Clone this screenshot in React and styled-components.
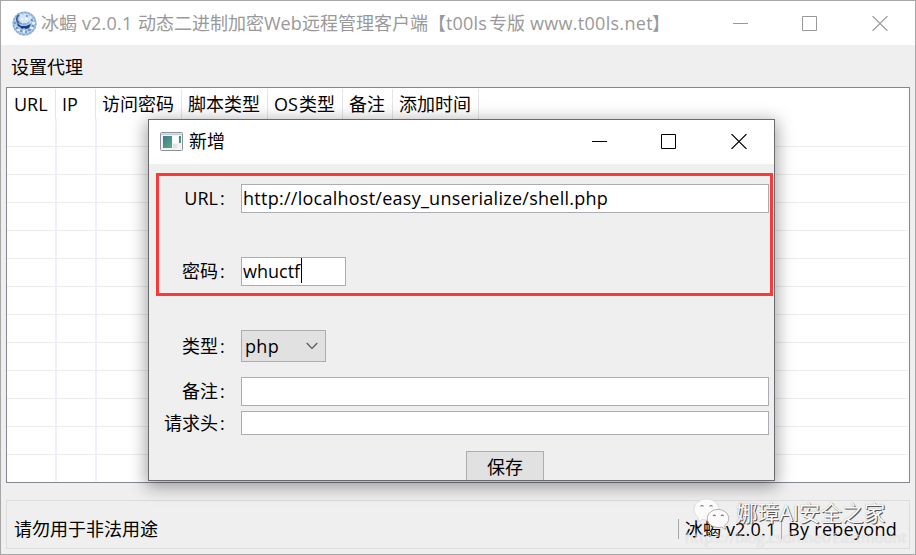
import React from "react";
import styled, { createGlobalStyle } from "styled-components";

const Global = createGlobalStyle`
  * { box-sizing: border-box; }
  body { margin: 0; overflow: hidden; }
  body, input, button {
    font-family: "Open Sans", "Noto Sans CJK SC", sans-serif;
    font-size: 18px;
    line-height: 24px;
    color: #000;
  }
`;

const Desktop = styled.div`
  width: 916px;
  height: 555px;
  padding: 1px;
  background: #a6a6a6;
  position: relative;
`;
const Window = styled.main`
  height: 553px;
  display: flex;
  flex-direction: column;
  background: #efefef;
`;
const TitleBar = styled.header`
  height: 44px;
  flex: none;
  display: flex;
  align-items: center;
  background: #fff;
  color: ${(p) => p.$color || "#999"};
  padding-left: 11px;
`;
const Caption = styled.div`
  flex: 1;
  white-space: pre;
  margin: -1px 0 0 ${(p) => p.$left}px;
`;
/* Latin run set in its own box so the CJK grid around it keeps an 18px pitch */
const Latin = styled.span`
  display: inline-block;
  width: ${(p) => p.$w}px;
  font-size: ${(p) => p.$size || 18}px;
  letter-spacing: ${(p) => p.$ls || 0}px;
  white-space: pre;
`;
const Controls = styled.div`
  display: flex;
  width: ${(p) => p.$width}px;
  gap: ${(p) => p.$gap}px;
  svg { display: block; }
  svg:last-child { margin-left: 1px; }
`;
const MenuBar = styled.nav`
  height: 42px;
  flex: none;
  display: flex;
  align-items: center;
  padding: 2px 0 0 10px;
`;
const Table = styled.section`
  height: 396px;
  flex: none;
  margin: 0 5px;
  border: 1px solid #828790;
  background: #fff;
  display: flex;
  flex-direction: column;
`;
const HeaderRow = styled.div`
  display: grid;
  grid-template-columns: 49px 40px 86px 86px 75px 50px 86px;
  height: 31px;
  flex: none;
  padding-top: 1px;
`;
const HeaderCell = styled.div`
  border-right: 1px solid #e5e5e5;
  padding: 3px 0 0 ${(p) => p.$pad || 6}px;
  white-space: nowrap;
`;
const Rows = styled.div`
  flex: 1;
  min-height: 0;
  overflow: hidden;
  margin: 0 1px 1px 0;
`;
const Row = styled.div`
  height: 28px;
  border-bottom: 1px solid #ececec;
  display: grid;
  grid-template-columns: 50px 40px 86px 86px 75px 50px 86px;
`;
const Cell = styled.div`
  border-right: 2px solid #edf1f7;
  height: 28px;
`;
const StatusBar = styled.footer`
  height: 49px;
  margin: 17px 5px 0;
  border: 1px solid #dcdcdc;
  display: flex;
  align-items: center;
  padding: 9px 12px 0 7px;
`;
const StatusText = styled.div`
  flex: ${(p) => (p.$grow ? 1 : "none")};
  white-space: nowrap;
`;
const Divider = styled.i`
  width: 1px;
  height: 20px;
  background: #a9a9a9;
  margin: 0 6px;
`;

const Dialog = styled.div`
  position: absolute;
  left: 148px;
  top: 119px;
  width: 627px;
  height: 362px;
  border: 1px solid #6b6b6e;
  background: #efefef;
  box-shadow: 0 4px 16px 2px rgba(0, 0, 0, 0.36);
  display: flex;
  flex-direction: column;
`;
const DialogTitle = styled(TitleBar)`
  padding-bottom: 1px;
`;
const Form = styled.div`
  flex: 1;
  min-height: 0;
  overflow: hidden;
  padding: 20px 5px 0 0;
  display: flex;
  flex-direction: column;
`;
const Field = styled.label`
  display: grid;
  grid-template-columns: 92px 1fr;
  grid-template-rows: 100%;
  align-items: center;
  height: ${(p) => p.$h}px;
  margin-bottom: ${(p) => p.$gap}px;
  flex: none;
`;
const Label = styled.span`
  padding: 0 14px 1px 0;
  text-align: right;
  white-space: nowrap;
`;
const Colon = styled.span`
  display: inline-block;
  width: 7px;
  margin-left: 2px;
  text-align: left;
`;
const Input = styled.div`
  height: 100%;
  width: ${(p) => p.$w || 528}px;
  border: 1px solid #abadb3;
  background: #fff;
  padding: 0 0 2px 1px;
  display: flex;
  align-items: center;
`;
const Caret = styled.i`
  width: 1px;
  height: 25px;
  background: #000;
`;
const Select = styled.div`
  height: 100%;
  width: 85px;
  border: 1px solid #adadad;
  background: #e1e1e1;
  display: flex;
  align-items: center;
  justify-content: space-between;
  padding: 0 7px 0 3px;
`;
const Save = styled.button`
  width: 78px;
  height: 34px;
  flex: none;
  margin-left: 317px;
  border: 1px solid #adadad;
  background: #e1e1e1;
  padding: 0 0 2px;
`;
const Highlight = styled.div`
  position: absolute;
  left: 156px;
  top: 173px;
  width: 617px;
  height: 123px;
  border: 3px solid #fc3939;
`;
const Watermark = styled.div`
  position: absolute;
  left: 693px;
  top: 497px;
  display: flex;
  align-items: center;
`;
const WatermarkName = styled.span`
  margin-left: 6px;
  font-size: 21.6px;
  line-height: 32px;
  height: 34px;
  white-space: nowrap;
  color: #f8f8f8;
  text-shadow: 1px 1px 0.5px #555, 0 0 1px #999;
`;
const WatermarkUrl = styled.div`
  position: absolute;
  left: 685px;
  top: 526px;
  font-size: 14.5px;
  letter-spacing: 0.1px;
  white-space: nowrap;
  color: rgba(255, 255, 255, 0.5);
  text-shadow: 0 0 1px rgba(120, 120, 120, 0.3);
`;

const Min = () => (
  <svg width="15" height="15" stroke="currentColor"><path d="M0 7.5H15" /></svg>
);
const Max = () => (
  <svg width="15" height="15" fill="none" stroke="currentColor"><path d="M.5 .5H14.5V14.5H.5Z" /></svg>
);
const Close = () => (
  <svg width="16" height="15" stroke="currentColor" strokeWidth="1.1"><path d="M.5 0L15.5 15M15.5 0L.5 15" /></svg>
);

const Globe = () => (
  <svg width="25" height="25" viewBox="0 0 25 25">
    <circle cx="12.5" cy="12.5" r="12" fill="#a3c1e2" />
    <g fill="none" strokeWidth="1.4" strokeDasharray="2 1.5">
      <circle cx="12.5" cy="12.5" r="11.2" stroke="#86a9d2" />
      <circle cx="12.5" cy="12.5" r="9.2" stroke="#dcebf8" />
    </g>
    <path d="M8 4l7-1 5 4-1 5-8 1-4-4z" fill="#d3e5f6" />
    <path d="M7 4C4 6 4 10 7 12" fill="none" stroke="#3d5f95" strokeWidth="1.8" />
    <path d="M7 12c5 2 10 1 13-4" fill="none" stroke="#6d8dba" strokeWidth="1" strokeDasharray="3 1" />
    <path d="M5 12l4 3 5 0 5-2-2 4-3 1-2-1-2 1-2-2-2-1z" fill="#173d85" />
    <path d="M4 17h2M8 20h2M13 21h2M16 19h3M20 15h2M2 12h2M19 9h2M14 5h2" stroke="#5f87bb" strokeWidth="1.4" />
    <path d="M5 19h3M11 20h2M18 17h3M13 8h3M9 8h2M20 12h3" stroke="#f4faff" strokeWidth="1.4" />
  </svg>
);
const AppIcon = () => (
  <svg width="23" height="19" viewBox="0 0 23 19">
    <defs>
      <linearGradient id="pane" x1="0" y1="0" x2="1" y2="1">
        <stop offset="0" stopColor="#44749b" />
        <stop offset="1" stopColor="#58ad79" />
      </linearGradient>
    </defs>
    <rect x=".5" y=".5" width="22" height="18" rx="1" fill="#f3f3f3" stroke="#8c9299" />
    <path d="M1 1.5H22V3H1Z" fill="#c3cbd4" />
    <path d="M3 4H12V16H3Z" fill="url(#pane)" />
    <path d="M13 4H18V11H13Z" fill="#fff" />
    <path d="M13 12H17V16H13Z" fill="#e3e3e3" />
    <path d="M19 4H21V11H19Z" fill="url(#pane)" />
  </svg>
);
const Chevron = () => (
  <svg width="12" height="8" fill="none" stroke="#555" strokeWidth="1.2"><path d="M.7 1L6 6.3L11.3 1" /></svg>
);
const WeChat = () => (
  <svg width="37" height="32" viewBox="0 0 37 32" strokeWidth=".8">
    <path d="M13.5 1C6.500 1 1 5.500 1 11.500c0 3.500 1.800 6.400 4.800 8.300L4.500 24l5-2.600c1.300.4 2.600.6 4 .6 7 0 12.500-4.700 12.500-10.500S20.500 1 13.500 1z" fill="#fbfbfb" stroke="#d5d5d5" />
    <path d="M25 11.500c-6 0-10.700 4-10.700 9s4.700 9 10.700 9c1.300 0 2.400-.2 3.500-.5l4.200 2.300-1.200-3.800c2.600-1.600 4.200-4.100 4.200-7 0-5-4.700-9-10.700-9z" fill="#fbfbfb" stroke="#a0a0a0" />
    <g fill="none" stroke="#777" strokeWidth="1.1">
      <path d="M7.500 8.500q1.500-2 3 0M16.500 8.500q1.500-2 3 0M20 18q1.300-1.800 2.600 0M28 18q1.300-1.800 2.600 0" />
    </g>
  </svg>
);

const COLUMNS = [0, 1, 2, 3, 4, 5, 6];
const ROWS = Array.from({ length: 13 }, (_, i) => i);

export default function App() {
  return (
    <Desktop>
      <Global />
      <Window>
        <TitleBar>
          <Globe />
          <Caption $left={4}>
            冰蝎<Latin $w={61} $ls={0.2}>{" v2.0.1 "}</Latin>动态二进制加密<Latin $w={38}>Web</Latin>远程管理客户端【<Latin $w={43} $ls={0.2}>t00ls</Latin>专版<Latin $w={127} $ls={0.3}>{" www.t00ls.net"}</Latin>】
          </Caption>
          <Controls $width={182} $gap={54}><Min /><Max /><Close /></Controls>
        </TitleBar>
        <MenuBar>设置代理</MenuBar>
        <Table>
          <HeaderRow>
            <HeaderCell $pad={7}><Latin $w={34}>URL</Latin></HeaderCell>
            <HeaderCell><Latin $w={18}>IP</Latin></HeaderCell>
            <HeaderCell>访问密码</HeaderCell>
            <HeaderCell>脚本类型</HeaderCell>
            <HeaderCell><Latin $w={25}>OS</Latin>类型</HeaderCell>
            <HeaderCell>备注</HeaderCell>
            <HeaderCell>添加时间</HeaderCell>
          </HeaderRow>
          <Rows>
            {ROWS.map((r) => (
              <Row key={r}>{COLUMNS.map((c) => <Cell key={c} />)}</Row>
            ))}
          </Rows>
        </Table>
        <StatusBar>
          <StatusText $grow>请勿用于非法用途</StatusText>
          <Divider />
          <StatusText>冰蝎<Latin $w={54} $ls={0.2}>{" v2.0.1"}</Latin></StatusText>
          <Divider />
          <StatusText><Latin $w={109} $ls={0.3}>By rebeyond</Latin></StatusText>
        </StatusBar>
      </Window>

      <Dialog>
        <DialogTitle $color="#000">
          <AppIcon />
          <Caption $left={6}>新增</Caption>
          <Controls $width={182} $gap={54}><Min /><Max /><Close /></Controls>
        </DialogTitle>
        <Form>
          <Field $h={29} $gap={44}>
            <Label><Latin $w={34}>URL</Latin><Colon>:</Colon></Label>
            <Input><Latin $w={366} $ls={0.26}>http://localhost/easy_unserialize/shell.php</Latin></Input>
          </Field>
          <Field $h={29} $gap={44}>
            <Label>密码<Colon>:</Colon></Label>
            <Input $w={105}><Latin $w={58}>whuctf</Latin><Caret /></Input>
          </Field>
          <Field $h={32} $gap={15}>
            <Label>类型<Colon>:</Colon></Label>
            <Select><Latin $w={36} $ls={0.3}>php</Latin><Chevron /></Select>
          </Field>
          <Field $h={29} $gap={5}>
            <Label>备注<Colon>:</Colon></Label>
            <Input />
          </Field>
          <Field $h={24} $gap={16}>
            <Label>请求头<Colon>:</Colon></Label>
            <Input />
          </Field>
          <Save>保存</Save>
        </Form>
      </Dialog>
      <Highlight />
      <WatermarkUrl>https://blog.csdn.net/Eastmount</WatermarkUrl>
      <Watermark>
        <WeChat />
        <WatermarkName>娜璋AI安全之家</WatermarkName>
      </Watermark>
    </Desktop>
  );
}
